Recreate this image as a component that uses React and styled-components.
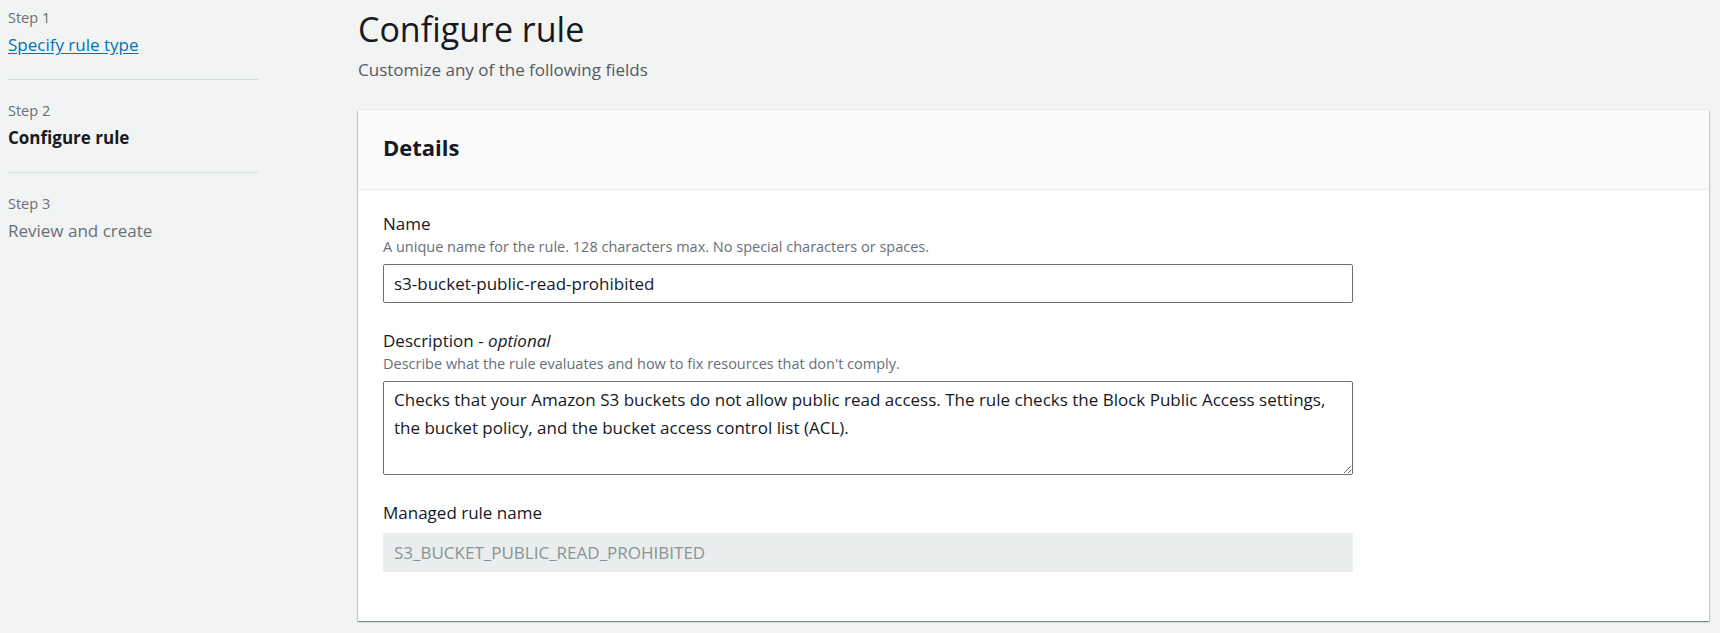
import React from 'react';
import styled, { createGlobalStyle } from 'styled-components';

const GlobalStyle = createGlobalStyle`
  * { box-sizing: border-box; }
  html, body {
    margin: 0;
    padding: 0;
    background: #f2f3f3;
    font-family: 'Open Sans', 'Noto Sans', Arial, sans-serif;
    color: #16191f;
  }
`;

const Page = styled.div`
  display: grid;
  grid-template-columns: 250px 1fr;
  column-gap: 100px;
  padding: 0 11px 0 8px;
  min-height: 633px;
`;

const Nav = styled.nav`
  display: flex;
  flex-direction: column;
`;

const NavItem = styled.div`
  padding: ${({ $first }) => ($first ? '8px' : '21px')} 0 22px;
  border-bottom: ${({ $last }) => ($last ? 'none' : '1px solid #d5dbdb')};
`;

const StepLabel = styled.div`
  font-size: 14.5px;
  line-height: 20px;
  color: #687078;
  margin-bottom: 5px;
`;

const StepLink = styled.a`
  font-size: 17px;
  line-height: 24px;
  color: #0073bb;
  text-decoration: underline;
  text-underline-offset: 2px;
  cursor: pointer;
`;

const StepTitle = styled.div`
  font-size: 17px;
  line-height: 24px;
  font-weight: ${({ $active }) => ($active ? 700 : 400)};
  color: ${({ $active }) => ($active ? '#16191f' : '#687078')};
`;

const Main = styled.main`
  padding-top: 7px;
  min-width: 0;
`;

const Title = styled.h1`
  margin: 0;
  font-size: 34px;
  line-height: 44px;
  font-weight: 400;
  color: #16191f;
`;

const Subtitle = styled.p`
  margin: 7px 0 0;
  font-size: 17px;
  line-height: 24px;
  color: #545b64;
`;

const Card = styled.section`
  margin-top: 28px;
  background: #ffffff;
  box-shadow: 0 1px 1px 0 rgba(0, 28, 36, 0.3), 1px 1px 1px 0 rgba(0, 28, 36, 0.15),
    -1px 1px 1px 0 rgba(0, 28, 36, 0.15), 0 -1px 0 0 rgba(0, 28, 36, 0.06);
`;

const CardHeader = styled.div`
  background: #fafafa;
  padding: 23px 25px 28px;
  border-bottom: 1px solid #eaeded;
`;

const CardTitle = styled.h2`
  margin: 0;
  font-size: 22px;
  line-height: 28px;
  font-weight: 700;
  color: #16191f;
`;

const CardBody = styled.div`
  padding: 22px 25px 49px;
  display: flex;
  flex-direction: column;
  gap: 26px;
`;

const Field = styled.div`
  display: flex;
  flex-direction: column;
  max-width: 970px;
`;

const Label = styled.label`
  font-size: 17px;
  line-height: 24px;
  color: #16191f;

  em { font-style: italic; }
`;

const Hint = styled.div`
  margin-top: 1px;
  font-size: 14.5px;
  line-height: 20px;
  color: #687078;
`;

const Control = styled.div`
  margin-top: ${({ $tight }) => ($tight ? '8px' : '7px')};
`;

const TextInput = styled.input`
  display: block;
  width: 100%;
  height: 39px;
  padding: 0 10px;
  font-family: inherit;
  font-size: 17px;
  color: #16191f;
  background: ${({ disabled }) => (disabled ? '#eaeded' : '#ffffff')};
  border: 1px solid ${({ disabled }) => (disabled ? '#eaeded' : '#687078')};
  border-radius: 2px;
  outline: none;

  &:disabled {
    color: #879596;
    -webkit-text-fill-color: #879596;
    opacity: 1;
  }
`;

const TextArea = styled.textarea`
  display: block;
  width: 100%;
  height: 94px;
  padding: 4px 10px;
  font-family: inherit;
  font-size: 17px;
  line-height: 27.5px;
  color: #16191f;
  background: #ffffff;
  border: 1px solid #687078;
  border-radius: 2px;
  outline: none;
  resize: vertical;
`;

const steps = [
  { label: 'Step 1', title: 'Specify rule type', state: 'link' },
  { label: 'Step 2', title: 'Configure rule', state: 'active' },
  { label: 'Step 3', title: 'Review and create', state: 'pending' },
];

export default function App() {
  return (
    <>
      <GlobalStyle />
      <Page>
        <Nav>
          {steps.map((s, i) => (
            <NavItem key={s.label} $first={i === 0} $last={i === steps.length - 1}>
              <StepLabel>{s.label}</StepLabel>
              {s.state === 'link' ? (
                <StepLink>{s.title}</StepLink>
              ) : (
                <StepTitle $active={s.state === 'active'}>{s.title}</StepTitle>
              )}
            </NavItem>
          ))}
        </Nav>

        <Main>
          <Title>Configure rule</Title>
          <Subtitle>Customize any of the following fields</Subtitle>

          <Card>
            <CardHeader>
              <CardTitle>Details</CardTitle>
            </CardHeader>
            <CardBody>
              <Field>
                <Label>Name</Label>
                <Hint>A unique name for the rule. 128 characters max. No special characters or spaces.</Hint>
                <Control>
                  <TextInput defaultValue="s3-bucket-public-read-prohibited" />
                </Control>
              </Field>

              <Field>
                <Label>
                  Description - <em>optional</em>
                </Label>
                <Hint>Describe what the rule evaluates and how to fix resources that don't comply.</Hint>
                <Control>
                  <TextArea defaultValue="Checks that your Amazon S3 buckets do not allow public read access. The rule checks the Block Public Access settings, the bucket policy, and the bucket access control list (ACL)." />
                </Control>
              </Field>

              <Field>
                <Label>Managed rule name</Label>
                <Control $tight>
                  <TextInput disabled value="S3_BUCKET_PUBLIC_READ_PROHIBITED" readOnly />
                </Control>
              </Field>
            </CardBody>
          </Card>
        </Main>
      </Page>
    </>
  );
}
